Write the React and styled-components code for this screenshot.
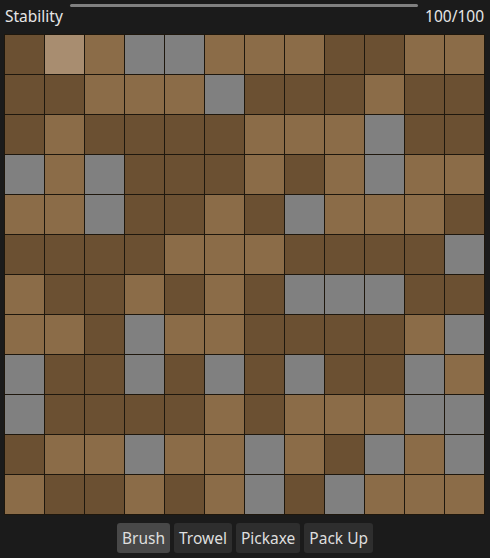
import React from "react";
import styled, { createGlobalStyle } from "styled-components";

const GlobalStyle = createGlobalStyle`
  html, body {
    margin: 0;
    padding: 0;
    background: #1b1b1b;
  }
  body {
    font-family: "Noto Sans", "Open Sans", sans-serif;
  }
`;

const Panel = styled.div`
  width: 490px;
  height: 558px;
  background: #1b1b1b;
  display: flex;
  flex-direction: column;
  box-sizing: border-box;
`;

const Header = styled.div`
  height: 34px;
  display: flex;
  align-items: flex-start;
  padding: 0 6px 0 5px;
  color: #e6e6e6;
  font-size: 15.5px;
`;

const Label = styled.span`
  line-height: 32px;
`;

const Track = styled.div`
  flex: 1;
  height: 3px;
  margin: 4px 7px 0 7px;
  background: #808080;
  border-radius: 2px;
`;

const Grid = styled.div`
  display: grid;
  grid-template-columns: repeat(12, 39px);
  grid-auto-rows: 39px;
  gap: 1px;
  padding: 1px;
  background: #1e170d;
  width: max-content;
  margin-left: 4px;
`;

const colors = {
  D: "#6b5032",
  L: "#8b6c48",
  G: "#808080",
  H: "#a88d70",
};

const Cell = styled.div`
  background: ${(p) => colors[p.kind]};
`;

const Footer = styled.div`
  display: flex;
  justify-content: center;
  gap: 4px;
  padding-top: 8px;
`;

const Button = styled.button`
  height: 30px;
  padding: 0 5px;
  border: none;
  border-radius: 3px;
  background: ${(p) => (p.active ? "#484848" : "#2e2e2e")};
  color: #dedede;
  font-family: "Noto Sans", "Open Sans", sans-serif;
  font-size: 15.5px;
`;

const rows = [
  "DHLGGLLLDDLL",
  "DDLLLGDDDLDD",
  "DLDDDDLLLGDD",
  "GLGDDDLDLGLL",
  "LLGDDLDGLLLD",
  "DDDDLLLDDDDG",
  "LDDLDLDGGGDD",
  "LLDGLLDDDDLG",
  "GDDGDGDGDDGL",
  "GDDDDLDLLLGG",
  "DLLGLLGLDGLG",
  "LDDLDLGDGLLL",
];

const tools = ["Brush", "Trowel", "Pickaxe", "Pack Up"];

export default function App() {
  return (
    <>
      <GlobalStyle />
      <Panel>
        <Header>
          <Label>Stability</Label>
          <Track />
          <Label>100/100</Label>
        </Header>
        <Grid>
          {rows.map((r, i) =>
            r.split("").map((k, j) => <Cell key={i + "-" + j} kind={k} />)
          )}
        </Grid>
        <Footer>
          {tools.map((t, i) => (
            <Button key={t} active={i === 0}>
              {t}
            </Button>
          ))}
        </Footer>
      </Panel>
    </>
  );
}
